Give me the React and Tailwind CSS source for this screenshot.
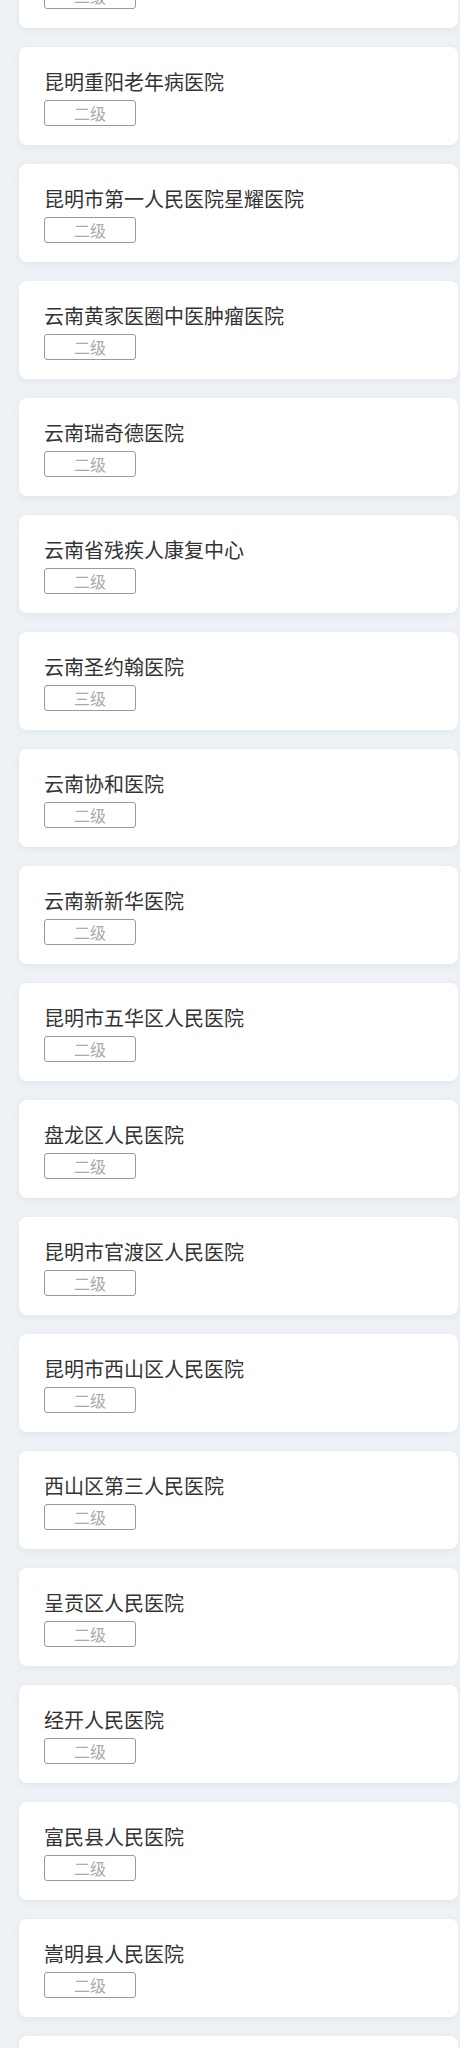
const HOSPITALS = [
  { name: '昆明市儿童医院', level: '二级' },
  { name: '昆明重阳老年病医院', level: '二级' },
  { name: '昆明市第一人民医院星耀医院', level: '二级' },
  { name: '云南黄家医圈中医肿瘤医院', level: '二级' },
  { name: '云南瑞奇德医院', level: '二级' },
  { name: '云南省残疾人康复中心', level: '二级' },
  { name: '云南圣约翰医院', level: '三级' },
  { name: '云南协和医院', level: '二级' },
  { name: '云南新新华医院', level: '二级' },
  { name: '昆明市五华区人民医院', level: '二级' },
  { name: '盘龙区人民医院', level: '二级' },
  { name: '昆明市官渡区人民医院', level: '二级' },
  { name: '昆明市西山区人民医院', level: '二级' },
  { name: '西山区第三人民医院', level: '二级' },
  { name: '呈贡区人民医院', level: '二级' },
  { name: '经开人民医院', level: '二级' },
  { name: '富民县人民医院', level: '二级' },
  { name: '嵩明县人民医院', level: '二级' },
  { name: '宜良县第一人民医院', level: '二级' },
];

export default function App() {
  return (
    <div
      className="h-[2048px] overflow-hidden bg-[#eef2f6]"
      style={{ fontFamily: '"Noto Sans CJK SC", "Noto Sans", sans-serif' }}
    >
      <div className="mt-[-70px] flex flex-col gap-[19px] pl-[19px] pr-[2px]">
        {HOSPITALS.map((h, i) => (
          <div
            key={i}
            className="h-[98px] shrink-0 rounded-lg bg-white pl-[25px] pt-[21px] shadow-[0_2px_6px_rgba(180,195,210,0.25)]"
          >
            <div className="text-[20px] leading-[28px] text-[#333]">{h.name}</div>
            <div className="mt-[4px] flex h-[26px] w-[92px] items-center justify-center rounded-[3px] border border-[#9a9a9a] text-[16px] text-[#aaa]">
              {h.level}
            </div>
          </div>
        ))}
      </div>
    </div>
  );
}
